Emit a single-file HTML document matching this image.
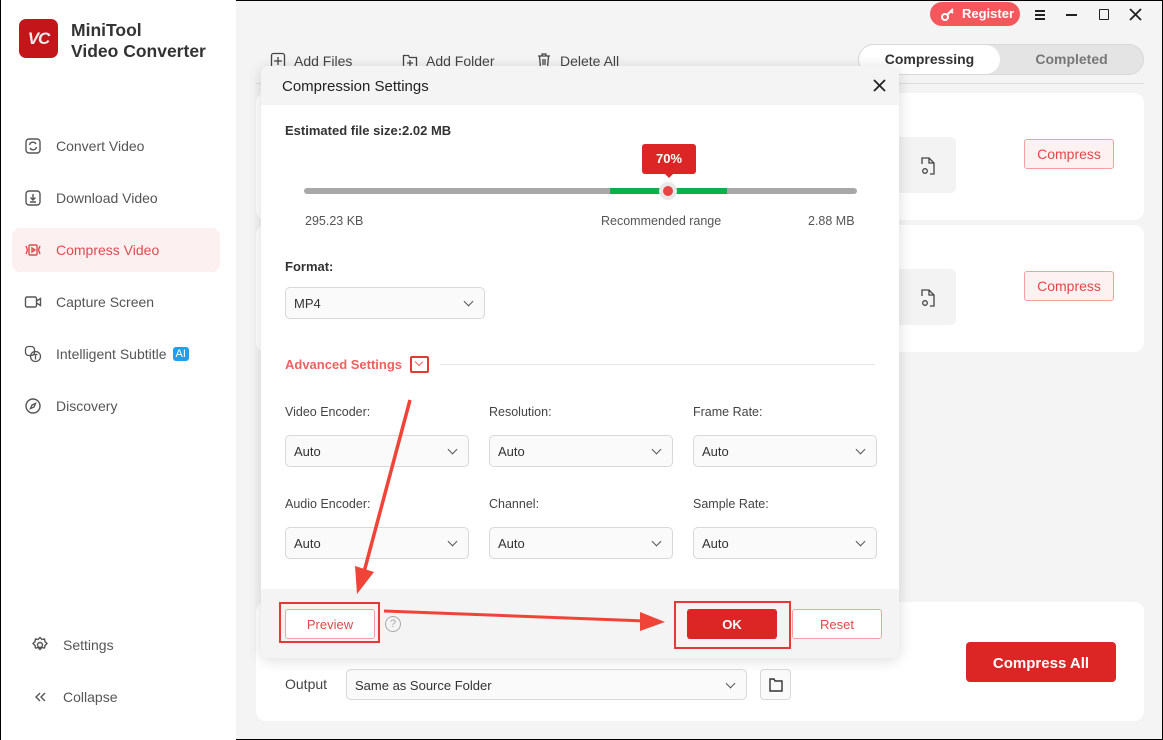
<!DOCTYPE html>
<html><head><meta charset="utf-8"><style>
*{box-sizing:border-box;margin:0;padding:0}
body{width:1163px;height:740px;overflow:hidden;font-family:"Liberation Sans",sans-serif;background:#f4f4f4;position:relative;color:#333}
.a{position:absolute}
.side{left:0;top:0;width:236px;height:740px;background:#fff;border-left:1px solid #000}
.nav{position:absolute;left:24px;font-size:14px;color:#555;display:flex;align-items:center;gap:14px}
.nav svg{width:18px;height:18px}
.sel{left:12px;top:228px;width:208px;height:44px;background:#fdf0f0;border-radius:8px}
.card{background:#fff;border-radius:10px}
.dd{position:absolute;height:32px;border:1px solid #d8d8d8;border-radius:5px;background:#fafafa;font-size:13px;color:#333;padding:8px 8px;}
.dd:after{content:"";position:absolute;right:12px;top:10px;width:6px;height:6px;border-right:1.3px solid #555;border-bottom:1.3px solid #555;transform:rotate(45deg)}
.lbl{position:absolute;font-size:12.5px;color:#444}
.btnc{position:absolute;width:90px;height:30px;border:1px solid #f5a0a0;background:#fdf1f1;color:#e04848;font-size:14px;text-align:center;line-height:28px;border-radius:3px}
.tb{position:absolute;top:52px;font-size:14px;color:#444;display:flex;align-items:center;gap:8px}
</style></head><body>
<div class="a" style="left:0;top:0;width:1163px;height:1px;background:#000"></div>
<div class="a" style="left:0;bottom:0;width:1163px;height:1px;background:#000"></div>
<div class="a" style="right:0;top:0;width:1px;height:740px;background:#000"></div>
<div class="a side"></div>
<div class="a" style="left:19px;top:19px;width:39px;height:39px;border-radius:7px;background:#c4151b;color:#eee;font-weight:bold;font-style:italic;font-size:17px;text-align:center;line-height:39px;letter-spacing:-1px">VC</div>
<div class="a" style="left:71px;top:20px;font-size:17.5px;font-weight:bold;color:#333;line-height:21px">MiniTool<br>Video Converter</div>
<div class="a sel"></div>
<div class="nav" style="top:137px"><svg viewBox="0 0 18 18" fill="none" stroke="#555" stroke-width="1.4"><rect x="2" y="2" width="14" height="14" rx="3"/><path d="M5.5 8a3.5 3.5 0 0 1 6.5-1M12.5 10a3.5 3.5 0 0 1-6.5 1"/></svg>Convert Video</div>
<div class="nav" style="top:189px"><svg viewBox="0 0 18 18" fill="none" stroke="#555" stroke-width="1.4"><rect x="2" y="2" width="14" height="14" rx="3"/><path d="M9 5v6M6.5 8.5L9 11l2.5-2.5M6 13h6"/></svg>Download Video</div>
<div class="nav" style="top:241px;color:#e5484d"><svg viewBox="0 0 18 18" fill="none" stroke="#e5484d" stroke-width="1.4"><rect x="5" y="4" width="8" height="10" rx="1"/><path d="M8 7l3 2-3 2zM2 5l1.5 4L2 13M16 5l-1.5 4L16 13"/></svg>Compress Video</div>
<div class="nav" style="top:293px"><svg viewBox="0 0 18 18" fill="none" stroke="#555" stroke-width="1.4"><rect x="1.5" y="4" width="11" height="10" rx="1.5"/><path d="M12.5 8l4-2.5v7l-4-2.5"/></svg>Capture Screen</div>
<div class="nav" style="top:345px"><svg viewBox="0 0 18 18" fill="none" stroke="#555" stroke-width="1.3"><rect x="1.5" y="1.5" width="9" height="9" rx="3"/><circle cx="11.5" cy="11.5" r="5"/><path d="M9.5 9.5h4M11.5 9.5v5"/></svg>Intelligent Subtitle <span style="background:#1ea0f0;color:#fff;font-size:11px;padding:1px 3px;border-radius:3px;margin-left:-8px">AI</span></div>
<div class="nav" style="top:397px"><svg viewBox="0 0 18 18" fill="none" stroke="#555" stroke-width="1.4"><circle cx="9" cy="9" r="7"/><path d="M11.5 6.5L10 10 6.5 11.5 8 8z"/></svg>Discovery</div>
<div class="nav" style="left:31px;top:636px"><svg viewBox="0 0 18 18" fill="none" stroke="#555" stroke-width="1.4"><circle cx="9" cy="9" r="2.5"/><path d="M9 1.5l2 2 2.5-.5.5 2.5 2 2-2 2-.5 2.5-2.5-.5-2 2-2-2-2.5.5-.5-2.5-2-2 2-2 .5-2.5 2.5.5z"/></svg>Settings</div>
<div class="nav" style="left:31px;top:688px"><svg viewBox="0 0 18 18" fill="none" stroke="#555" stroke-width="1.4"><path d="M9 5L5 9l4 4M14 5l-4 4 4 4"/></svg>Collapse</div>

<div class="a" style="left:930px;top:2px;width:90px;height:24px;border-radius:12px;background:#f4585c;color:#fff;font-size:13px;font-weight:bold;line-height:24px;padding-left:32px">Register</div>
<svg class="a" style="left:940px;top:6px" width="16" height="16" viewBox="0 0 16 16" fill="none" stroke="#fff" stroke-width="2"><circle cx="5" cy="11" r="3"/><path d="M7 9l6-6M11 5l2 2"/></svg>
<svg class="a" style="left:1034px;top:9px" width="12" height="12"><path d="M1 2h10M1 6h10M1 10h10" stroke="#222" stroke-width="2"/></svg>
<div class="a" style="left:1066px;top:14px;width:11px;height:2px;background:#222"></div>
<div class="a" style="left:1099px;top:9px;width:10px;height:11px;border:1.8px solid #222;border-radius:1px"></div>
<svg class="a" style="left:1129px;top:8px" width="13" height="13"><path d="M1 1l11 11M12 1L1 12" stroke="#222" stroke-width="1.8"/></svg>

<div class="tb" style="left:270px"><svg width="16" height="18" viewBox="0 0 16 18" fill="none" stroke="#444" stroke-width="1.3"><rect x="1.5" y="1.5" width="13" height="15" rx="2"/><path d="M8 5v8M4 9h8"/></svg>Add Files</div>
<div class="tb" style="left:402px"><svg width="16" height="18" viewBox="0 0 16 18" fill="none" stroke="#444" stroke-width="1.3"><path d="M1.5 3.5h5l1 2h7v11h-13z"/><path d="M8 8v6M5 11h6"/></svg>Add Folder</div>
<div class="tb" style="left:536px"><svg width="16" height="18" viewBox="0 0 16 18" fill="none" stroke="#444" stroke-width="1.3"><path d="M2 4h12M6 4V2h4v2M3.5 4l1 12h7l1-12M7 7v6M9 7v6"/></svg>Delete All</div>
<div class="a" style="left:858px;top:44px;width:286px;height:31px;border-radius:16px;background:#e4e4e4;border:1px solid #d8d8d8"></div>
<div class="a" style="left:859px;top:45px;width:141px;height:29px;border-radius:15px;background:#fff;font-size:14px;font-weight:bold;text-align:center;line-height:29px;color:#333">Compressing</div>
<div class="a" style="left:1000px;top:45px;width:143px;height:29px;font-size:14px;font-weight:bold;text-align:center;line-height:29px;color:#777">Completed</div>
<div class="a" style="left:256px;top:83px;width:888px;height:1px;background:#ddd"></div>

<div class="a card" style="left:256px;top:93px;width:888px;height:127px"></div>
<div class="a card" style="left:256px;top:225px;width:888px;height:127px"></div>
<div class="a" style="left:890px;top:137px;width:66px;height:56px;background:#f3f3f3;border-radius:5px"></div>
<div class="a" style="left:890px;top:269px;width:66px;height:56px;background:#f3f3f3;border-radius:5px"></div>
<svg class="a" style="left:920px;top:156px" width="16" height="20" viewBox="0 0 16 20" fill="none" stroke="#444" stroke-width="1.3"><path d="M2 8V2h7l5 5v11h-4M9 2v5h5"/><circle cx="5" cy="15" r="2.3"/></svg>
<svg class="a" style="left:920px;top:288px" width="16" height="20" viewBox="0 0 16 20" fill="none" stroke="#444" stroke-width="1.3"><path d="M2 8V2h7l5 5v11h-4M9 2v5h5"/><circle cx="5" cy="15" r="2.3"/></svg>
<div class="btnc" style="left:1024px;top:139px">Compress</div>
<div class="btnc" style="left:1024px;top:271px">Compress</div>

<div class="a card" style="left:256px;top:602px;width:888px;height:119px"></div>
<div class="a" style="left:285px;top:676px;font-size:14px;color:#444">Output</div>
<div class="dd" style="left:346px;top:669px;width:401px;height:31px;font-size:13px">Same as Source Folder</div>
<div class="a" style="left:760px;top:669px;width:31px;height:31px;border:1px solid #d8d8d8;border-radius:4px;background:#fafafa"></div>
<svg class="a" style="left:768px;top:676px" width="16" height="17" viewBox="0 0 16 17" fill="none" stroke="#333" stroke-width="1.4"><path d="M2 3h4l1 2h7v10H2z"/></svg>
<div class="a" style="left:966px;top:642px;width:150px;height:40px;background:#dc2626;border-radius:4px;color:#fff;font-weight:bold;font-size:15px;text-align:center;line-height:44px">Compress All</div>

<!-- dialog -->
<div class="a" style="left:261px;top:66px;width:638px;height:592px;background:#fff;border-radius:8px;box-shadow:0 2px 14px rgba(0,0,0,.15);overflow:hidden">
 <div class="a" style="left:0;top:0;width:638px;height:39px;background:#f4f4f4"></div>
 <div class="a" style="left:21px;top:12px;font-size:15px;color:#222">Compression Settings</div>
 <svg class="a" style="left:612px;top:13px" width="13" height="13"><path d="M1 1l11 11M12 1L1 12" stroke="#222" stroke-width="1.8"/></svg>
 <div class="a" style="left:24px;top:57px;font-size:13px;font-weight:bold;color:#333">Estimated file size:2.02 MB</div>
 <div class="a" style="left:381px;top:78px;width:54px;height:30px;background:#dc2626;border-radius:3px;color:#fff;font-size:13px;font-weight:bold;text-align:center;line-height:30px">70%</div>
 <div class="a" style="left:403px;top:107px;border-left:5px solid transparent;border-right:5px solid transparent;border-top:5px solid #dc2626"></div>
 <div class="a" style="left:43px;top:122px;width:553px;height:6px;background:#a8a8a8;border-radius:3px"></div>
 <div class="a" style="left:349px;top:122px;width:117px;height:6px;background:#0ab04b"></div>
 <div class="a" style="left:398px;top:116px;width:18px;height:18px;border-radius:50%;background:#e8e8e8"></div>
 <div class="a" style="left:402px;top:120px;width:10px;height:10px;border-radius:50%;background:#e84444"></div>
 <div class="a" style="left:44px;top:148px;font-size:12.5px;color:#555">295.23 KB</div>
 <div class="a" style="left:340px;top:148px;font-size:12.5px;color:#555">Recommended range</div>
 <div class="a" style="left:547px;top:148px;font-size:12.5px;color:#555">2.88 MB</div>
 <div class="a" style="left:24px;top:193px;font-size:13px;font-weight:bold;color:#333">Format:</div>
 <div class="dd" style="left:24px;top:221px;width:200px;height:32px">MP4</div>
 <div class="a" style="left:24px;top:291px;font-size:13px;font-weight:bold;color:#f06060">Advanced Settings</div>
 <div class="a" style="left:149px;top:290px;width:19px;height:17px;border:2px solid #e53935;border-radius:2px"></div>
 <div class="a" style="left:155px;top:293px;width:6px;height:6px;border-right:1.3px solid #f06060;border-bottom:1.3px solid #f06060;transform:rotate(45deg)"></div>
 <div class="a" style="left:179px;top:298px;width:435px;height:1px;background:#e6e6e6"></div>
 <div class="lbl" style="left:24px;top:339px">Video Encoder:</div>
 <div class="lbl" style="left:228px;top:339px">Resolution:</div>
 <div class="lbl" style="left:432px;top:339px">Frame Rate:</div>
 <div class="dd" style="left:24px;top:369px;width:184px">Auto</div>
 <div class="dd" style="left:228px;top:369px;width:184px">Auto</div>
 <div class="dd" style="left:432px;top:369px;width:184px">Auto</div>
 <div class="lbl" style="left:24px;top:431px">Audio Encoder:</div>
 <div class="lbl" style="left:228px;top:431px">Channel:</div>
 <div class="lbl" style="left:432px;top:431px">Sample Rate:</div>
 <div class="dd" style="left:24px;top:461px;width:184px">Auto</div>
 <div class="dd" style="left:228px;top:461px;width:184px">Auto</div>
 <div class="dd" style="left:432px;top:461px;width:184px">Auto</div>
 <div class="a" style="left:0;top:523px;width:638px;height:69px;background:#f4f4f4"></div>
 <div class="a" style="left:18px;top:536px;width:101px;height:41px;border:2px solid #e53935"></div>
 <div class="a" style="left:24px;top:543px;width:90px;height:30px;border:1px solid #f5a0a0;background:#fff;color:#e04848;font-size:13px;text-align:center;line-height:30px;border-radius:3px">Preview</div>
 <div class="a" style="left:124px;top:550px;width:16px;height:16px;border:1.3px solid #aaa;border-radius:50%;font-size:11px;color:#aaa;text-align:center;line-height:14px">?</div>
 <div class="a" style="left:413px;top:535px;width:117px;height:48px;border:2px solid #e53935"></div>
 <div class="a" style="left:426px;top:543px;width:90px;height:30px;background:#dc2626;border-radius:3px;color:#fff;font-weight:bold;font-size:13px;text-align:center;line-height:32px">OK</div>
 <div class="a" style="left:531px;top:543px;width:90px;height:30px;border:1px solid #f5a0a0;background:#fff;color:#e04848;font-size:13px;text-align:center;line-height:30px;border-radius:3px">Reset</div>
</div>
<svg class="a" style="left:0;top:0" width="1163" height="740">
 <path d="M410 400 L364 572" stroke="#f04438" stroke-width="3.5" fill="none"/>
 <path d="M355 566 L357 594 L374 572 Z" fill="#f04438"/>
 <path d="M384 611 L645 621" stroke="#f04438" stroke-width="3" fill="none"/>
 <path d="M640 612 L665 622 L640 631 Z" fill="#f04438"/>
</svg>
</body></html>
